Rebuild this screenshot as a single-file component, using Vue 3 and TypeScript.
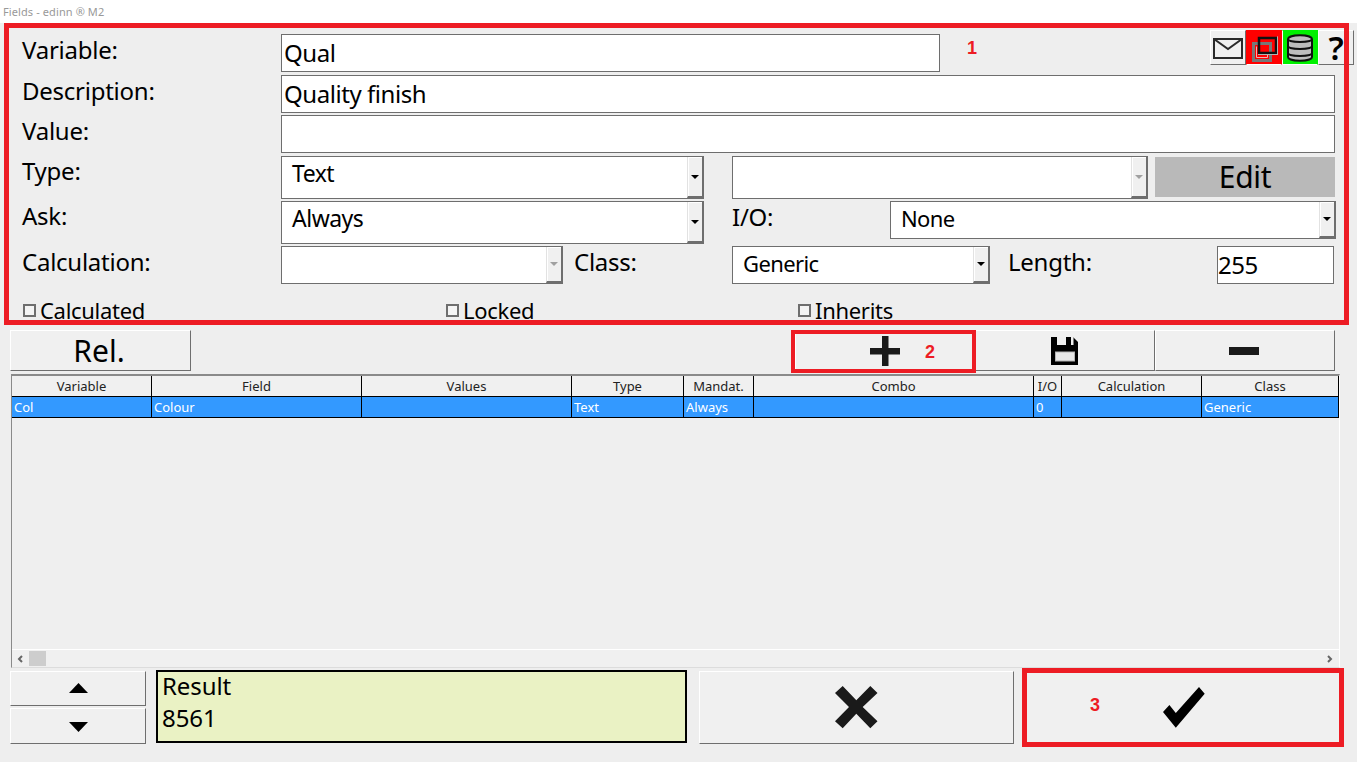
<script setup lang="ts">
interface Column { title: string; width: number; value: string }

const columns: Column[] = [
  { title: 'Variable', width: 140, value: 'Col' },
  { title: 'Field', width: 210, value: 'Colour' },
  { title: 'Values', width: 210, value: '' },
  { title: 'Type', width: 112, value: 'Text' },
  { title: 'Mandat.', width: 70, value: 'Always' },
  { title: 'Combo', width: 280, value: '' },
  { title: 'I/O', width: 28, value: '0' },
  { title: 'Calculation', width: 140, value: '' },
  { title: 'Class', width: 137, value: 'Generic' },
]
</script>

<template>
  <div class="page">
    <header class="title">Fields - edinn ® M2</header>

    <section class="form">
      <div class="row row-variable">
        <span class="label label-main">Variable:</span>
        <div class="field field-variable">Qual</div>
        <div class="tools">
          <button class="tool">
            <svg width="30" height="22" viewBox="0 0 30 22" fill="none" stroke="#2a2a2a" stroke-width="2">
              <rect x="1" y="2" width="28" height="19" />
              <path d="M1 2 L15 12 L29 2" />
            </svg>
          </button>
          <button class="tool tool-red">
            <svg width="28" height="28" viewBox="0 0 28 28" fill="none">
              <rect x="3.500" y="9.500" width="17" height="17" stroke="#777" stroke-width="3" />
              <path d="M6.500 23.500 V12.500 M6.500 23.500 H17.500 V21" stroke="#f0b0b0" stroke-width="1" />
              <path d="M27.500 2.500 V20.500 H8" stroke="#e8e8e8" stroke-width="1" />
              <rect x="9" y="4" width="17" height="15" stroke="#111" stroke-width="2.500" />
            </svg>
          </button>
          <button class="tool tool-green">
            <svg width="28" height="30" viewBox="0 0 28 30" fill="#bdbdbd" stroke="#111" stroke-width="2">
              <path d="M2 6 C2 1 26 1 26 6 V24 C26 29 2 29 2 24 Z" />
              <path d="M2 6 C2 10 26 10 26 6" fill="none" />
              <path d="M2 13 C2 17 26 17 26 13" fill="none" />
              <path d="M2 20 C2 24 26 24 26 20" fill="none" />
            </svg>
          </button>
          <button class="tool tool-help">?</button>
        </div>
      </div>

      <div class="row row-description">
        <span class="label label-main">Description:</span>
        <div class="field field-wide">Quality finish</div>
      </div>

      <div class="row row-value">
        <span class="label label-main">Value:</span>
        <div class="field field-wide"></div>
      </div>

      <div class="row row-type">
        <span class="label label-main label-up">Type:</span>
        <div class="combo combo-tall combo-type">
          <span class="combo-text">Text</span>
          <span class="combo-arrow"><i class="caret"></i></span>
        </div>
        <div class="combo combo-tall combo-extra">
          <span class="combo-arrow combo-arrow-off"><i class="caret caret-off"></i></span>
        </div>
        <button class="edit">Edit</button>
      </div>

      <div class="row row-ask">
        <span class="label label-main label-up">Ask:</span>
        <div class="combo combo-tall combo-type">
          <span class="combo-text">Always</span>
          <span class="combo-arrow"><i class="caret"></i></span>
        </div>
        <span class="label label-io">I/O:</span>
        <div class="combo combo-none">
          <span class="combo-text combo-text-small">None</span>
          <span class="combo-arrow"><i class="caret"></i></span>
        </div>
      </div>

      <div class="row row-calc">
        <span class="label label-main">Calculation:</span>
        <div class="combo combo-calc">
          <span class="combo-arrow combo-arrow-off"><i class="caret caret-off"></i></span>
        </div>
        <span class="label label-class">Class:</span>
        <div class="combo combo-class">
          <span class="combo-text combo-text-small">Generic</span>
          <span class="combo-arrow"><i class="caret"></i></span>
        </div>
        <span class="label label-length">Length:</span>
        <div class="field field-length">255</div>
      </div>

      <div class="row row-checks">
        <label class="check check-calc"><i class="box"></i>Calculated</label>
        <label class="check check-locked"><i class="box"></i>Locked</label>
        <label class="check"><i class="box"></i>Inherits</label>
      </div>
    </section>

    <nav class="actions">
      <button class="btn btn-rel">Rel.</button>
      <button class="btn btn-action btn-add">
        <svg width="30" height="30" viewBox="0 0 30 30" fill="#1a1a1a"><path d="M12 0 H18.500 V12 H30 V18.500 H18.500 V30 H12 V18.500 H0 V12 H12 Z" /></svg>
      </button>
      <button class="btn btn-action btn-save">
        <svg width="27" height="28" viewBox="0 0 27 28">
          <path fill="#000" d="M0 0 H22 L27 5 V28 H0 Z" />
          <rect x="6" y="0" width="9" height="8" fill="#efefef" />
          <rect x="20" y="0" width="2.500" height="8" fill="#efefef" />
          <rect x="4.500" y="15" width="19" height="9" fill="#e8e8e8" stroke="#b5b5b5" stroke-width="1" />
        </svg>
      </button>
      <button class="btn btn-action btn-remove">
        <svg width="30" height="8" viewBox="0 0 30 8"><rect width="30" height="8" fill="#1a1a1a" /></svg>
      </button>
    </nav>

    <section class="grid">
      <div class="grid-row grid-head">
        <div v-for="c in columns" :key="c.title" class="cell cell-head" :style="{ width: c.width + 'px' }">{{ c.title }}</div>
      </div>
      <div class="grid-row grid-selected">
        <div v-for="c in columns" :key="c.title" class="cell" :style="{ width: c.width + 'px' }">{{ c.value }}</div>
      </div>
      <div class="grid-empty"></div>
      <div class="scrollbar">
        <svg class="chev" width="6" height="8" viewBox="0 0 6 8" fill="none" stroke="#666" stroke-width="2"><path d="M5 1 L2 4 L5 7" /></svg>
        <span class="thumb"></span>
        <svg class="chev chev-right" width="6" height="8" viewBox="0 0 6 8" fill="none" stroke="#666" stroke-width="2"><path d="M1 1 L4 4 L1 7" /></svg>
      </div>
    </section>

    <footer class="bottom">
      <div class="stepper">
        <button class="btn step step-up"><svg width="19" height="10" viewBox="0 0 19 10"><path d="M9.500 0 L19 10 H0 Z" fill="#000" /></svg></button>
        <button class="btn step step-down"><svg width="19" height="10" viewBox="0 0 19 10"><path d="M0 0 H19 L9.500 10 Z" fill="#000" /></svg></button>
      </div>
      <div class="result"><div class="result-text">Result<br />8561</div></div>
      <button class="btn btn-cancel">
        <svg width="43" height="43" viewBox="0 0 43 43"><path fill="#1a1a1a" d="M7.700 0 L21.300 14.300 L35.300 0 L42.500 7 L27.700 21 L42.500 35.300 L35.300 42.300 L21.300 27.700 L7.700 42.300 L0 35.300 L14 21 L0 7 Z" /></svg>
      </button>
      <button class="btn btn-ok">
        <svg width="42" height="41" viewBox="0 0 42 41"><path fill="#000" d="M0 25 L6.400 18 L12.800 26 L36 0 L41.700 6.700 L12.800 40.700 Z" /></svg>
      </button>
    </footer>

    <div class="mark mark-1"></div>
    <div class="mark mark-2"></div>
    <div class="mark mark-3"></div>
    <span class="num num-1">1</span>
    <span class="num num-2">2</span>
    <span class="num num-3">3</span>
  </div>
</template>

<style scoped>
.page {
  position: relative;
  width: 1357px;
  height: 762px;
  overflow: hidden;
  background: #eeeeee;
  color: #000;
  font-family: "Noto Sans", sans-serif;
  font-size: 24px;
}
.title {
  height: 23px;
  box-sizing: border-box;
  background: #fff;
  color: #999;
  font-size: 11px;
  letter-spacing: 0.1px;
  line-height: 23px;
  padding-left: 3px;
}
.form {
  height: 307px;
  overflow: hidden;
  box-sizing: border-box;
  padding-top: 11px;
  padding-left: 22px;
}
.row { display: flex; align-items: flex-start; }
.row-description { margin-top: 3px; }
.row-value { margin-top: 2px; }
.row-type { margin-top: 3px; }
.row-ask { margin-top: 2px; }
.row-calc { margin-top: 2px; }
.row-checks { margin-top: 10px; }

.label { line-height: 32px; white-space: nowrap; letter-spacing: -0.25px; }
.label-main { width: 259px; flex: none; }
.label-up { margin-top: -1px; }
.label-io { width: 158px; margin-left: 28px; }
.label-class { width: 158px; margin-left: 11px; }
.label-length { width: 209px; margin-left: 18px; }

.field {
  box-sizing: border-box;
  height: 38px;
  background: #fff;
  border: 1px solid #6e6e6e;
  padding-left: 2px;
  line-height: 35px;
  letter-spacing: -0.45px;
  flex: none;
}
.field-variable { width: 659px; }
.field-wide { width: 1054px; }
.field-length { width: 117px; padding-left: 0; }

.tools { display: flex; margin-left: 270px; margin-top: -4px; }
.tool {
  width: 36px;
  height: 35px;
  padding: 0;
  box-sizing: border-box;
  display: flex;
  align-items: center;
  justify-content: center;
  background: #f0f0f0;
  border: 1px solid;
  border-color: #fff #6e6e6e #6e6e6e #fff;
}
.tool-red { background: #ff0000; border-color: #ff0000 #ff0000 #fff #ff0000; }
.tool-green { background: #00f000; border-color: #00f000 #00f000 #fff #fff; }
.tool-help { font-family: "Noto Sans", sans-serif; font-weight: 600; font-size: 33px; line-height: 1; color: #000; }

.combo {
  box-sizing: border-box;
  height: 38px;
  display: flex;
  background: #fff;
  border: 1px solid #6e6e6e;
  flex: none;
  justify-content: flex-end;
}
.combo-tall { height: 43px; }
.combo-type { width: 423px; }
.combo-extra { width: 416px; margin-left: 28px; }
.combo-none { width: 446px; }
.combo-calc { width: 282px; }
.combo-class { width: 258px; }
.combo-text { flex: 1; padding-left: 10px; font-size: 23px; letter-spacing: -0.5px; line-height: 33px; }
.combo-text-small { font-size: 22px; letter-spacing: -0.6px; }
.combo-arrow {
  width: 16px;
  box-sizing: border-box;
  display: flex;
  align-items: center;
  justify-content: center;
  background: #f0f0f0;
  border-left: 1px solid #e2e2e2;
  border-bottom: 2px solid #6e6e6e;
  border-right: 1px solid #6e6e6e;
  box-shadow: inset 1px 1px 0 #fff;
}
.caret {
  width: 0;
  height: 0;
  border-left: 4px solid transparent;
  border-right: 4px solid transparent;
  border-top: 4px solid #000;
}
.caret-off { border-top-color: #a0a0a0; }
.edit {
  width: 180px;
  height: 40px;
  margin-left: 7px;
  margin-top: 1px;
  padding: 0;
  border: 0;
  background: #b9b9b9;
  font-family: inherit;
  font-size: 30px;
  letter-spacing: -0.3px;
  line-height: 40px;
  color: #000;
}
.check { display: flex; align-items: center; font-size: 22px; letter-spacing: -0.3px; line-height: 32px; white-space: nowrap; }
.check-calc { width: 423px; margin-left: 1px; }
.check-locked { width: 352px; }
.box {
  width: 13px;
  height: 13px;
  box-sizing: border-box;
  margin-right: 4px;
  border: 2px solid #6e6e6e;
  background: #f4f4f4;
}

.actions { display: flex; height: 41px; padding-left: 10px; }
.btn {
  box-sizing: border-box;
  padding: 0;
  display: flex;
  align-items: center;
  justify-content: center;
  background: #f0f0f0;
  border: 1px solid;
  border-color: #fff #6e6e6e #6e6e6e #fff;
  color: #000;
  font-family: inherit;
}
.btn-rel { width: 181px; font-size: 30px; padding-right: 3px; }
.btn-action { width: 180px; }
.btn-add { margin-left: 604px; }
.btn-save { padding-right: 2px; }
.btn-remove { padding-right: 2px; }

.grid {
  box-sizing: border-box;
  width: 1329px;
  height: 294px;
  margin: 3px 0 0 11px;
  display: flex;
  flex-direction: column;
  border-top: 2px solid #8a8a8a;
  border-left: 1px solid #8a8a8a;
  border-right: 1px solid #fff;
  border-bottom: 1px solid #dcdcdc;
}
.grid-row { display: flex; flex: none; font-size: 13px; }
.cell {
  box-sizing: border-box;
  flex: none;
  height: 21px;
  line-height: 21px;
  padding-left: 2px;
  border-right: 1px solid #000;
  border-bottom: 1px solid #000;
  overflow: hidden;
  white-space: nowrap;
}
.cell-head { background: #f0f0f0; text-align: center; padding: 0; color: #222; }
.grid-selected { background: #3399ff; color: #fff; }
.grid-empty { flex: 1; background: #efefef; }
.scrollbar {
  flex: none;
  height: 18px;
  box-sizing: border-box;
  display: flex;
  align-items: center;
  background: #f0f0f0;
  border-top: 1px solid #fff;
  padding-left: 5px;
}
.thumb { width: 17px; height: 15px; margin-left: 6px; background: #cdcdcd; }
.chev-right { margin-left: auto; margin-right: 6px; }

.bottom { display: flex; align-items: flex-start; padding-left: 10px; margin-top: 2px; }
.stepper { display: flex; flex-direction: column; gap: 2px; margin-top: 1px; }
.step { width: 136px; height: 35px; }
.step-up { padding-bottom: 2px; }
.step-down { height: 36px; padding-top: 2px; }
.result {
  box-sizing: border-box;
  width: 531px;
  height: 73px;
  margin-left: 10px;
  background: #eaf2c4;
  border: 2px solid #000;
  padding-left: 4px;
  line-height: 32px;
  letter-spacing: -0.1px;
}
.result-text { margin-top: -2px; }
.btn-cancel { width: 315px; height: 73px; margin-left: 12px; margin-top: 1px; }
.btn-ok { width: 320px; height: 73px; margin-left: 10px; margin-top: 1px; border-color: transparent; }

.mark { position: absolute; box-sizing: border-box; border: 5px solid #ed1c24; pointer-events: none; }
.mark-1 { left: 4px; top: 23px; width: 1345px; height: 302px; }
.mark-2 { left: 791px; top: 330px; width: 185px; height: 43px; border-width: 4px; }
.mark-3 { left: 1022px; top: 668px; width: 322px; height: 79px; }
.num {
  position: absolute;
  font-family: "Liberation Sans", sans-serif;
  font-weight: 700;
  font-size: 18px;
  line-height: 20px;
  color: #ed1c24;
}
.num-1 { left: 967px; top: 38px; }
.num-2 { left: 925px; top: 342px; }
.num-3 { left: 1090px; top: 695px; }
</style>
